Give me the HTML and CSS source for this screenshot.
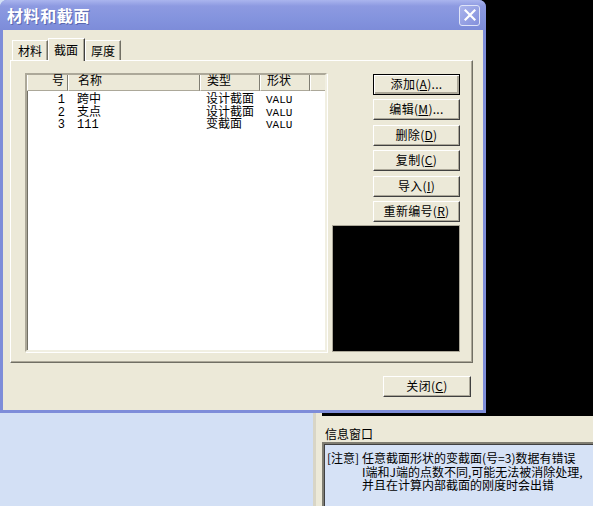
FILE: index.html
```html
<!DOCTYPE html>
<html lang="zh">
<head>
<meta charset="utf-8">
<title>材料和截面</title>
<link rel="stylesheet" href="styles.css">
</head>
<body>
<div class="desk">
  <div class="app-left"></div>
  <div class="app-right">
    <div class="view"></div>
    <div class="info-title">信息窗口</div>
    <div class="info-box">
      <div class="msg">
        <span class="tag">[注意]</span>
        <div class="lines">
          <div>任意截面形状的变截面(号=3)数据有错误</div>
          <div>I端和J端的点数不同,可能无法被消除处理,</div>
          <div>并且在计算内部截面的刚度时会出错</div>
        </div>
      </div>
    </div>
  </div>

  <div class="dialog">
    <div class="titlebar">
      <span class="title">材料和截面</span>
      <span class="close">
        <svg width="12" height="12" viewBox="0 0 12 12"><path d="M1.5 1.5 L10.5 10.5 M10.5 1.5 L1.5 10.5" stroke="#fff" stroke-width="2.2" stroke-linecap="square"/></svg>
      </span>
    </div>
    <div class="client">
      <div class="tabs">
        <div class="tab">材料</div>
        <div class="tab sel">截面</div>
        <div class="tab">厚度</div>
      </div>
      <div class="panel">
        <div class="list">
          <div class="hdr">
            <div class="c c1">号</div>
            <div class="c c2">名称</div>
            <div class="c c3">类型</div>
            <div class="c c4">形状</div>
            <div class="c c5"></div>
          </div>
          <div class="rows">
            <div class="row"><div class="c1">1</div><div class="c2">跨中</div><div class="c3">设计截面</div><div class="c4">VALU</div></div>
            <div class="row"><div class="c1">2</div><div class="c2">支点</div><div class="c3">设计截面</div><div class="c4">VALU</div></div>
            <div class="row"><div class="c1">3</div><div class="c2">111</div><div class="c3">变截面</div><div class="c4">VALU</div></div>
          </div>
        </div>
        <div class="side">
          <div class="btn default">添加(<u>A</u>)...</div>
          <div class="btn">编辑(<u>M</u>)...</div>
          <div class="btn">删除(<u>D</u>)</div>
          <div class="btn">复制(<u>C</u>)</div>
          <div class="btn">导入(<u>I</u>)</div>
          <div class="btn">重新编号(<u>R</u>)</div>
          <div class="preview"></div>
        </div>
      </div>
      <div class="footer">
        <div class="btn close-btn">关闭(<u>C</u>)</div>
      </div>
    </div>
  </div>
</div>
</body>
</html>
```
FILE: styles.css
```css
* { box-sizing: border-box; }
html, body { margin: 0; padding: 0; }
body {
  width: 593px;
  height: 506px;
  overflow: hidden;
  background: #000;
  font-family: "Noto Sans CJK SC", sans-serif;
  font-size: 12px;
  color: #000;
}
.desk {
  position: relative;
  width: 593px;
  height: 506px;
  display: grid;
  grid-template-columns: 313px 1fr;
}
.app-left { background: #d3e0f5; }
.app-right {
  display: flex;
  flex-direction: column;
  background: #ece9d8;
  border-left: 3px solid #d8d5c6;
  padding-left: 6px;
}
.view { height: 416px; background: #000; }
.info-title {
  height: 26px;
  padding: 10px 0 0 3px;
  line-height: 16px;
  font-size: 12px;
}
.info-box {
  flex: 1;
  background: #d6e2f6;
  border-top: 2px solid #7f7d72;
  border-left: 2px solid #7f7d72;
  box-shadow: inset 1px 1px 0 #404040;
  padding: 7px 0 0 3px;
  font-size: 12px;
  line-height: 13.5px;
}
.msg { display: flex; white-space: nowrap; }
.tag { width: 35px; flex: none; }

/* dialog window */
.dialog {
  position: absolute;
  left: 0;
  top: 0;
  width: 486px;
  height: 413px;
  display: flex;
  flex-direction: column;
  background: #7e8dd9;
  border-radius: 7px 7px 0 0;
  padding: 0 3px 3px 3px;
}
.titlebar {
  height: 30px;
  flex: none;
  display: flex;
  align-items: center;
  justify-content: space-between;
  padding: 0 3px 0 4px;
  margin: 0 -3px;
  border-radius: 7px 7px 0 0;
  background: linear-gradient(#aab5ee 0%, #8d9ae1 20%, #8494de 60%, #7d8cd9 100%);
}
.title {
  color: #fff;
  font-weight: bold;
  font-size: 16px;
  letter-spacing: 0.6px;
  text-shadow: 1px 1px 0 #5a68b0;
  padding-left: 3px;
}
.close {
  width: 21px;
  height: 21px;
  margin-right: 3px;
  border: 1px solid #dfe4f8;
  border-radius: 3px;
  background: linear-gradient(135deg, #aab4ec, #8390dc);
  display: flex;
  align-items: center;
  justify-content: center;
}
.client {
  flex: 1;
  background: #ece9d8;
  padding: 8px 10px 0 7px;
  display: flex;
  flex-direction: column;
}
.tabs {
  display: flex;
  align-items: flex-end;
  height: 22px;
  margin-left: 2px;
  position: relative;
  z-index: 1;
}
.tab {
  height: 20px;
  padding: 0 5px;
  line-height: 19px;
  white-space: nowrap;
  border-top: 1px solid #fff;
  border-left: 1px solid #fff;
  border-right: 1px solid #716f64;
  box-shadow: inset -1px 0 0 #aca899;
  background: #ece9d8;
  font-size: 12px;
}
.tab.sel {
  height: 23px;
  margin-bottom: -1px;
  padding: 0 6px 0 5px;
  line-height: 21px;
  border-right: 1px solid #404040;
}
.panel {
  width: 463px;
  height: 303px;
  flex: none;
  display: flex;
  align-items: flex-start;
  padding: 12px 0 0 14px;
  border-top: 1px solid #fff;
  border-left: 1px solid #fff;
  border-right: 1px solid #716f64;
  border-bottom: 1px solid #716f64;
  box-shadow: inset -1px -1px 0 #aca899;
}
.list {
  width: 302px;
  height: 279px;
  flex: none;
  background: #fff;
  border-top: 2px solid #aca899;
  border-left: 2px solid #aca899;
  border-right: 2px solid #f1efe2;
  border-bottom: 2px solid #f1efe2;
  box-shadow: inset 1px 1px 0 #716f64, 1px 1px 0 #fff;
  font-family: "Liberation Mono", "Noto Sans CJK SC", monospace;
  font-size: 12px;
}
.hdr {
  display: flex;
  height: 16px;
  background: #ece9d8;
  line-height: 15px;
}
.hdr .c {
  border-left: 1px solid #fff;
  border-right: 1px solid #7f7d72;
  border-bottom: 1px solid #aca899;
}
.c1 { width: 41px; text-align: right; padding-right: 3px; flex: none; }
.c2 { width: 132px; padding-left: 9px; flex: none; }
.c3 { width: 60px; padding-left: 6px; flex: none; }
.c4 { width: 50px; padding-left: 6px; flex: none; }
.c5 { flex: 1; border-right: none !important; }
.rows { padding-top: 3px; }
.row { display: flex; height: 12.7px; line-height: 12.7px; white-space: nowrap; }
.row .c1 { padding-right: 3px; }
.row .c4 { font-size: 11px; }
.side {
  width: 128px;
  margin-left: 5px;
  margin-top: 1px;
  display: flex;
  flex-direction: column;
  align-items: flex-end;
  gap: 4.4px;
}
.btn {
  width: 87px;
  height: 21px;
  background: #ece9d8;
  border-top: 1px solid #fff;
  border-left: 1px solid #fff;
  border-right: 1px solid #404040;
  border-bottom: 1px solid #404040;
  box-shadow: inset -1px -1px 0 #aca899;
  text-align: center;
  line-height: 18px;
  font-size: 12px;
  letter-spacing: 0.3px;
  white-space: nowrap;
}
.btn u { text-decoration: underline; }
.btn.default {
  border: 1px solid #000;
  box-shadow: inset 1px 1px 0 #fff, inset -2px -2px 0 #aca899, inset -1px -1px 0 #404040;
}
.preview {
  width: 128px;
  height: 127px;
  margin-top: -1.4px;
  background: #000;
  border: 1px solid #aca899;
}
.footer {
  display: flex;
  justify-content: flex-end;
  padding-top: 13px;
  padding-right: 2px;
}
.close-btn { width: 88px; height: 21px; }
```
